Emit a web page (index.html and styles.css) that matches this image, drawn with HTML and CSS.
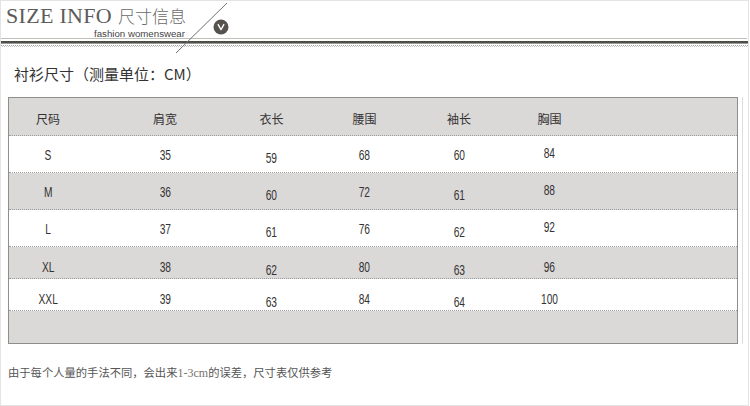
FILE: index.html
```html
<!DOCTYPE html>
<html lang="zh-CN">
<head>
<meta charset="utf-8">
<title>尺寸信息</title>
<link rel="stylesheet" href="styles.css">
</head>
<body>
<div class="page">
  <header class="brand">
    <div class="logo">
      <div class="logo-title"><span class="logo-en">SIZE INFO</span><span class="logo-cn">尺寸信息</span></div>
      <div class="logo-sub">fashion womenswear</div>
    </div>
    <svg class="brand-mark" width="65" height="56" viewBox="0 0 65 56" aria-hidden="true">
      <line x1="57" y1="3" x2="6" y2="53" stroke="#6f6f6f" stroke-width="1"/>
      <circle cx="51" cy="27" r="7.5" fill="#56534e"/>
      <polyline points="48.2,24.6 51,29.6 53.8,24.6" fill="none" stroke="#fff" stroke-width="1.4" stroke-linejoin="round" stroke-linecap="round"/>
    </svg>
  </header>
  <div class="rules">
    <div class="rule-light"></div>
    <div class="rule-dark"></div>
    <div class="rule-dots"></div>
  </div>
  <h2 class="title">衬衫尺寸（测量单位：CM）</h2>
  <div class="table-wrap">
    <div class="size-table">
      <div class="row head">
        <div class="cell">尺码</div><div class="cell">肩宽</div><div class="cell">衣长</div><div class="cell">腰围</div><div class="cell">袖长</div><div class="cell">胸围</div>
      </div>
      <div class="row data">
        <div class="cell">S</div><div class="cell">35</div><div class="cell low">59</div><div class="cell">68</div><div class="cell">60</div><div class="cell high">84</div>
      </div>
      <div class="row data alt">
        <div class="cell">M</div><div class="cell">36</div><div class="cell low">60</div><div class="cell">72</div><div class="cell low">61</div><div class="cell high">88</div>
      </div>
      <div class="row data">
        <div class="cell">L</div><div class="cell">37</div><div class="cell low">61</div><div class="cell">76</div><div class="cell low">62</div><div class="cell high">92</div>
      </div>
      <div class="row data alt compact">
        <div class="cell">XL</div><div class="cell">38</div><div class="cell low">62</div><div class="cell">80</div><div class="cell low">63</div><div class="cell">96</div>
      </div>
      <div class="row data compact">
        <div class="cell">XXL</div><div class="cell">39</div><div class="cell low">63</div><div class="cell">84</div><div class="cell low">64</div><div class="cell">100</div>
      </div>
      <div class="row alt filler"></div>
    </div>
  </div>
  <p class="note">由于每个人量的手法不同，会出来<span class="note-num">1-3cm</span>的误差，尺寸表仅供参考</p>
</div>
</body>
</html>
```
FILE: styles.css
```css
html, body {
  margin: 0;
  padding: 0;
  background: #fff;
}

.page {
  position: relative;
  box-sizing: border-box;
  width: 749px;
  height: 406px;
  border: 1px solid #e4e4e4;
  font-family: "Noto Sans CJK SC", "Liberation Sans", sans-serif;
  color: #333;
  overflow: hidden;
}

/* ---------- brand header ---------- */
.brand {
  height: 37px;
  padding-left: 5px;
  box-sizing: border-box;
}

.logo {
  display: inline-flex;
  flex-direction: column;
  align-items: flex-end;
  padding-top: 4px;
}

.logo-title {
  line-height: 22px;
  height: 22px;
  white-space: nowrap;
}

.logo-en {
  display: inline-block;
  line-height: 20px;
  font-family: "Liberation Serif", serif;
  font-size: 22px;
  color: #5c5c5c;
  letter-spacing: 0.3px;
}

.logo-cn {
  display: inline-block;
  line-height: 17px;
  font-family: "Noto Sans CJK SC", sans-serif;
  font-size: 17px;
  color: #6a6a6a;
  margin-left: 6px;
  font-weight: 300;
}

.logo-sub {
  font-family: "Liberation Sans", sans-serif;
  font-size: 9.7px;
  line-height: 9px;
  color: #444;
  margin-top: 2px;
  margin-right: 1px;
}

.brand-mark {
  position: absolute;
  left: 169px;
  top: -1px;
}

/* ---------- rules under header ---------- */
.rule-light {
  height: 1px;
  background: #bfbfb9;
  margin-right: 1px;
}

.rule-dark {
  margin-top: 2px;
  height: 2px;
  background: #4e4e49;
  border-bottom: 1px solid #9c9c96;
}

.rule-dots {
  margin-top: 1px;
  height: 2px;
  background:
    repeating-linear-gradient(90deg, #a8a8a8 0 1px, transparent 1px 2px) 0 0 / 100% 1px no-repeat,
    repeating-linear-gradient(90deg, transparent 0 1px, #c4c4c4 1px 2px) 0 1px / 100% 1px no-repeat;
}

/* ---------- title ---------- */
.title {
  margin: 16px 0 0;
  padding-left: 13px;
  font-size: 15px;
  line-height: 21px;
  font-weight: normal;
  color: #333;
}

/* ---------- size table ---------- */
.table-wrap {
  margin: 13px 0 0 7px;
  width: 730px;
  padding-right: 4px;
  border-right: 1px solid #dedede;
}

.size-table {
  border: 1px solid #8e8e8e;
  background: #fff;
}

.row {
  display: grid;
  grid-template-columns: 78px 156px 57px 129px 60px 121px;
  justify-items: center;
  align-items: start;
  box-sizing: border-box;
  border-bottom: 1px dotted #9d9d9d;
}

.row.head,
.row.alt {
  background: #dbd8d8;
}

.row.head {
  height: 38px;
  padding-top: 13px;
}

.row.head .cell {
  font-size: 12px;
  line-height: 16px;
  color: #333;
}

.row.data {
  height: 37px;
  padding-top: 11px;
}

.row.data.compact {
  height: 32px;
  padding-top: 12px;
}

.row.data .cell {
  font-family: "Liberation Sans", sans-serif;
  font-size: 15px;
  line-height: 16px;
  color: #333;
  transform: scaleX(0.68);
}

.row.data .cell.low {
  margin-top: 3px;
}

.row.data .cell.high {
  margin-top: -2px;
}

.row.filler {
  height: 32px;
  border-bottom: 0;
}

/* ---------- footnote ---------- */
.note {
  margin: 20px 0 0;
  padding-left: 7px;
  font-size: 11.3px;
  line-height: 16px;
  color: #555;
}

.note-num {
  font-family: "Liberation Serif", serif;
  font-size: 12px;
  color: #7a746c;
}
```
